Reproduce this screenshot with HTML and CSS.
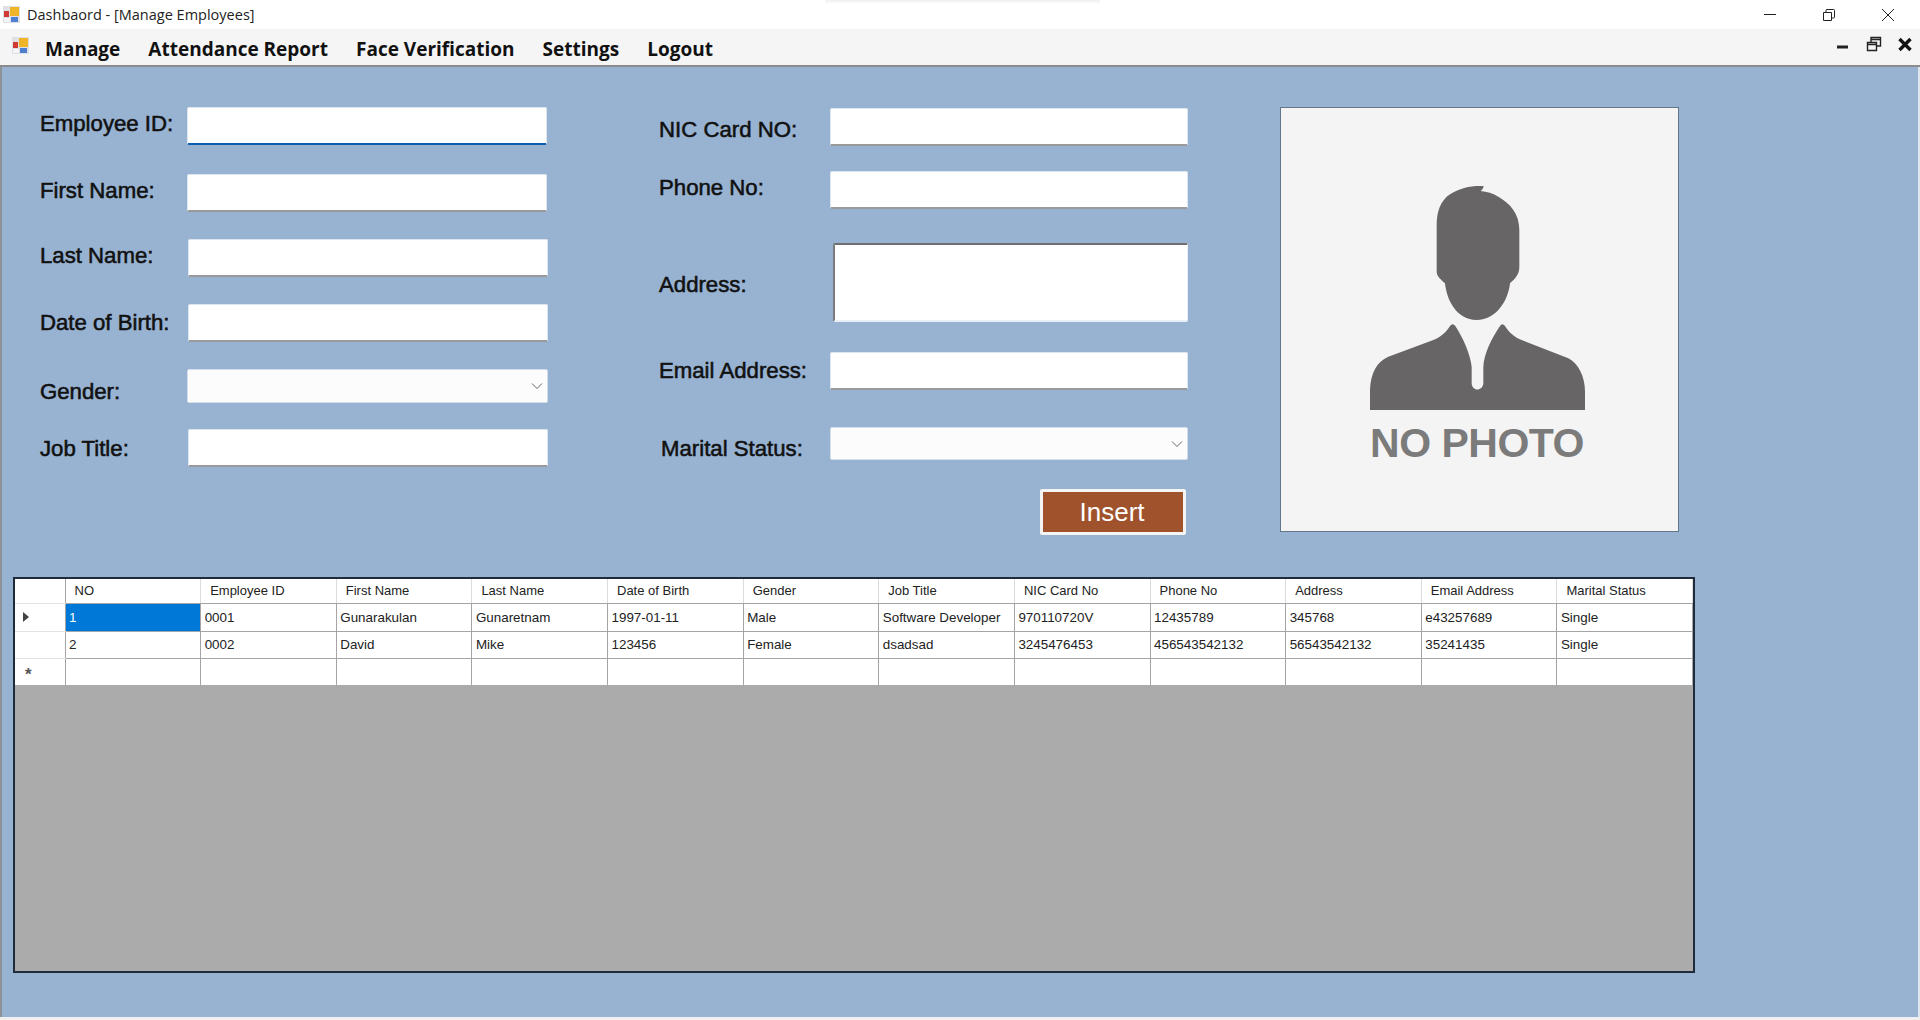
FILE: index.html
```html
<!DOCTYPE html>
<html lang="en">
<head>
    <meta charset="UTF-8">
    <meta name="viewport" content="width=device-width, initial-scale=1.0">
    <title>Dashbaord - [Manage Employees]</title>
    <link rel="stylesheet" href="styles.css">
</head>
<body>
    <div class="top-shadow"></div>
    <div class="titlebar">
        <svg class="app-icon" viewBox="0 0 17 17">
            <rect x="0" y="0" width="17" height="17" fill="#dfe0e4"/>
            <rect x="1" y="12" width="6" height="4" fill="#f4f4f6"/>
            <rect x="7" y="1" width="9" height="9" fill="#f0b429"/>
            <rect x="1" y="5" width="5" height="6" fill="#cf3a32"/>
            <rect x="8" y="11" width="7" height="5" fill="#4f7fd0"/>
        </svg>
        <span class="title-text">Dashbaord - [Manage Employees]</span>
        <div class="window-buttons">
            <svg viewBox="0 0 14 14"><path d="M1 6.5H13" stroke="#222" fill="none"/></svg>
            <svg viewBox="0 0 14 14"><path d="M1.5 4.5H9.5V12.5H1.5ZM4 4.5V2C4 1.5 4.5 1.5 5 1.5H11.5C12.2 1.5 12.5 2 12.5 2.5V9C12.5 9.5 12 10 11.5 10H9.5" stroke="#222" fill="none"/></svg>
            <svg viewBox="0 0 14 14"><path d="M1 1L13 13M13 1L1 13" stroke="#222" fill="none"/></svg>
        </div>
    </div>

    <div class="menubar">
        <svg class="menu-icon" viewBox="0 0 17 17">
            <rect x="0" y="0" width="17" height="17" fill="#dfe0e4"/>
            <rect x="1" y="12" width="6" height="4" fill="#f4f4f6"/>
            <rect x="7" y="1" width="9" height="9" fill="#f0b429"/>
            <rect x="1" y="5" width="5" height="6" fill="#cf3a32"/>
            <rect x="8" y="11" width="7" height="5" fill="#4f7fd0"/>
        </svg>
        <nav class="menu">
            <a>Manage</a>
            <a>Attendance Report</a>
            <a>Face Verification</a>
            <a>Settings</a>
            <a>Logout</a>
        </nav>
        <div class="mdi-buttons">
            <svg viewBox="0 0 16 16"><path d="M2 11H13" stroke="#222" stroke-width="3" fill="none"/></svg>
            <svg viewBox="0 0 16 16"><path d="M1.5 6.5H10.5V14.5H1.5ZM1.5 8.5H10.5M5 6V1.5H14.5V10H11M5 3.5H14.5" stroke="#222" stroke-width="1.4" fill="none"/></svg>
            <svg viewBox="0 0 16 16"><path d="M2.5 3L13.5 14M13.5 3L2.5 14" stroke="#111" stroke-width="3.4" fill="none"/></svg>
        </div>
    </div>

    <main class="content">
        <div class="form-area">
            <div class="col-left">
                <div class="field up"><label>Employee ID:</label><input class="focused" type="text"></div>
                <div class="field up"><label>First Name:</label><input type="text"></div>
                <div class="field up nudge"><label>Last Name:</label><input type="text"></div>
                <div class="field nudge"><label>Date of Birth:</label><input type="text"></div>
                <div class="field gender combo-row"><label>Gender:</label><div class="combo"><svg viewBox="0 0 12 8"><path d="M1 1.5L6 6.5L11 1.5" stroke="#666" fill="none"/></svg></div></div>
                <div class="field nudge job"><label>Job Title:</label><input type="text"></div>
            </div>

            <div class="col-right">
                <div class="field down"><label>NIC Card NO:</label><input type="text"></div>
                <div class="field up"><label>Phone No:</label><input type="text"></div>
                <div class="field address"><label>Address:</label><textarea></textarea></div>
                <div class="field"><label>Email Address:</label><input type="text"></div>
                <div class="field marital combo-row"><label>Marital Status:</label><div class="combo"><svg viewBox="0 0 12 8"><path d="M1 1.5L6 6.5L11 1.5" stroke="#666" fill="none"/></svg></div></div>
                <button class="insert-btn" type="button">Insert</button>
            </div>

            <div class="photo">
                <svg class="silhouette" viewBox="330 288 645 672">
                    <path d="M670 288C640 285 590 295 560 320C535 345 530 375 530 410L530 545C530 560 545 570 555 580C560 630 590 690 650 690C710 690 745 630 750 580C765 565 778 555 778 530L778 420C778 370 750 340 715 320C700 310 680 305 662 303C668 298 672 292 670 288Z"/>
                    <path d="M330 960L330 900C332 850 350 815 385 800L520 750C545 740 560 725 570 708Q578 698 586 708C610 745 630 790 635 830L635 880C636 905 668 905 670 880L670 830C672 790 695 745 720 708Q727 698 735 708C745 725 760 740 785 750L925 805C955 820 975 860 975 905L975 960Z"/>
                </svg>
                <div class="no-photo">NO PHOTO</div>
            </div>
        </div>

        <div class="grid-view">
            <table class="grid-table">
                <colgroup>
                    <col class="row-head-col">
                    <col><col><col><col><col><col><col><col><col><col><col><col>
                </colgroup>
                <thead>
                    <tr>
                        <th class="row-head"></th>
                        <th>NO</th><th>Employee ID</th><th>First Name</th><th>Last Name</th>
                        <th>Date of Birth</th><th>Gender</th><th>Job Title</th><th>NIC Card No</th>
                        <th>Phone No</th><th>Address</th><th>Email Address</th><th>Marital Status</th>
                    </tr>
                </thead>
                <tbody>
                    <tr>
                        <td class="row-head"><span class="row-arrow"></span></td>
                        <td class="selected">1</td><td>0001</td><td>Gunarakulan</td><td>Gunaretnam</td>
                        <td>1997-01-11</td><td>Male</td><td>Software Developer</td><td>970110720V</td>
                        <td>12435789</td><td>345768</td><td>e43257689</td><td>Single</td>
                    </tr>
                    <tr>
                        <td class="row-head"></td>
                        <td>2</td><td>0002</td><td>David</td><td>Mike</td>
                        <td>123456</td><td>Female</td><td>dsadsad</td><td>3245476453</td>
                        <td>456543542132</td><td>56543542132</td><td>35241435</td><td>Single</td>
                    </tr>
                    <tr>
                        <td class="row-head new-row">*</td>
                        <td></td><td></td><td></td><td></td><td></td><td></td>
                        <td></td><td></td><td></td><td></td><td></td><td></td>
                    </tr>
                </tbody>
            </table>
        </div>
    </main>
</body>
</html>
```

FILE: styles.css
```css
* {
    box-sizing: border-box;
}
body {
    margin: 0;
    height: 1020px;
    overflow: hidden;
    background-color: #f0f0f0;
    font-family: "Liberation Sans", Arial, sans-serif;
    color: #111;
}

/* shadow of a window above this one, only the edge shows */
.top-shadow {
    position: absolute;
    top: 0;
    left: 825px;
    width: 275px;
    height: 4px;
    background: linear-gradient(#efefef, white);
}

/* window title */
.titlebar {
    height: 29px;
    display: flex;
    align-items: center;
    background: white;
    padding-left: 3px;
}
.app-icon {
    width: 17px;
    height: 17px;
    margin-right: 7px;
}
.title-text {
    font-family: "Open Sans", sans-serif;
    font-size: 14.5px;
    color: #222;
}
.window-buttons {
    margin-left: auto;
    display: flex;
    gap: 45px;
    padding-right: 25px;
}
.window-buttons svg {
    width: 14px;
    height: 14px;
}

/* menu */
.menubar {
    height: 38px;
    display: flex;
    align-items: center;
    background-color: #f5f5f5;
    border-bottom: 2px solid #8c8c8c;
    padding-left: 12px;
}
.menu-icon {
    width: 17px;
    height: 17px;
    margin-right: 16px;
    margin-top: -3px;
}
.menu {
    display: flex;
    gap: 28px;
    padding-top: 3px;
}
.menu a {
    font-family: "Open Sans", sans-serif;
    font-size: 19px;
    font-weight: bold;
    color: #111;
}
.mdi-buttons {
    margin-left: auto;
    display: flex;
    gap: 15px;
    padding-right: 7px;
    margin-top: -6px;
}
.mdi-buttons svg {
    width: 16px;
    height: 16px;
}

/* main area */
.content {
    height: 950px;
    background-color: #98b3d1;
    border-left: 2px solid #8d9299;
    border-right: 2px solid #dfe5ec;
    padding-top: 40px;
}
.form-area {
    display: flex;
    align-items: flex-start;
    padding-left: 38px;
}
.col-left {
    width: 509px;
    margin-right: 110px;
    display: grid;
    grid-template-rows: 67px 65px 65px 65px 60px 38px;
    align-items: start;
}
.col-right {
    width: 529px;
    margin-right: 92px;
    margin-top: 1px;
    display: grid;
    grid-template-rows: 63px 72px 109px 75px 62px 46px;
    align-items: start;
}
.field {
    display: flex;
    align-items: center;
}
.field label {
    font-size: 22.2px;
    color: #111;
    -webkit-text-stroke: 0.55px #111;
    flex: 0 0 147px;
}
.col-right .field label {
    flex-basis: 171px;
}
.field input,
.field textarea,
.combo {
    height: 38px;
    width: 360px;
    background: white;
    border: 1px solid #dde6f0;
    border-bottom: 2px solid #9a9a9a;
    border-radius: 2px;
    padding: 0;
    margin: 0;
    outline: none;
    resize: none;
}
.col-right .field input {
    width: 358px;
}
.field input.focused {
    border-bottom-color: #0c5fb0;
}
.field.up label {
    margin-top: -4px;
}
.field.down label {
    margin-top: 6px;
}
.field.nudge input {
    margin-left: 1px;
}
.field.job label {
    margin-top: 2px;
}
.field.gender label {
    margin-top: 10px;
}
.field.address label {
    margin-top: 4px;
}
.field.marital label {
    padding-left: 2px;
    margin-top: 9px;
}
.field textarea {
    height: 79px;
    width: 355px;
    margin-left: 3px;
    border-top: 2px solid #6f6f6f;
    border-left: 2px solid #7a7a7a;
    border-right: 1px solid #e8eef5;
    border-bottom: 2px solid #e8eef5;
}
.combo-row {
    align-items: flex-start;
}
.combo {
    height: 34px;
    width: 361px;
    background: #fcfcfc;
    border: 1px solid #d5dfeb;
    display: flex;
    align-items: center;
    justify-content: flex-end;
    padding-right: 4px;
}
.col-right .combo {
    height: 33px;
    width: 358px;
}
.combo svg {
    width: 12px;
    height: 8px;
}
.insert-btn {
    width: 146px;
    height: 46px;
    justify-self: end;
    margin-right: 2px;
    background-color: #a0522d;
    color: white;
    border: 3px solid #f4f4f4;
    border-radius: 2px;
    font-family: "Liberation Sans", Arial, sans-serif;
    font-size: 26px;
    padding: 0 2px 0 0;
}

/* picture box */
.photo {
    width: 399px;
    height: 425px;
    background-color: #f4f4f5;
    border: 1px solid #64768c;
    display: flex;
    flex-direction: column;
    align-items: center;
    padding-top: 78px;
    padding-right: 5px;
}
.silhouette {
    width: 215px;
    height: 224px;
    fill: #686567;
}
.no-photo {
    font-size: 41px;
    font-weight: bold;
    color: #7b7b7b;
    line-height: 48px;
    margin-top: 9px;
    letter-spacing: -0.5px;
}

/* data grid */
.grid-view {
    width: 1682px;
    height: 396px;
    margin: 42px 0 0 11px;
    background-color: #ababab;
    border: 2px solid #1f2a3a;
}
.grid-table {
    width: 100%;
    table-layout: fixed;
    border-collapse: collapse;
    background: white;
    font-size: 13.4px;
    color: #222;
}
.row-head-col {
    width: 50px;
}
.grid-table th {
    height: 24px;
    font-size: 13px;
    font-weight: normal;
    text-align: left;
    padding: 0 0 0 9px;
    border-right: 1px solid #dcdcdc;
    border-bottom: 1px solid #a5a5a5;
}
.grid-table td {
    height: 27px;
    padding: 0 0 0 3.5px;
    border-right: 1px solid #a5a5a5;
    border-bottom: 1px solid #a5a5a5;
}
.grid-table tbody tr:first-child td {
    height: 28px;
}
.grid-table tbody tr:last-child td {
    border-bottom: none;
}
.grid-table .row-head {
    padding: 0;
    border-right: 1px solid #a5a5a5;
    border-bottom: 1px solid #e2e2e2;
}
.grid-table td.selected {
    background-color: #0078d7;
    color: white;
}
.row-arrow {
    display: block;
    width: 0;
    height: 0;
    margin-left: 8px;
    border-top: 5px solid transparent;
    border-bottom: 5px solid transparent;
    border-left: 6px solid #444;
}
.grid-table .new-row {
    text-align: left;
    font-weight: bold;
    font-size: 17px;
    color: #555;
    padding-top: 6px;
    padding-left: 10px;
}
```
